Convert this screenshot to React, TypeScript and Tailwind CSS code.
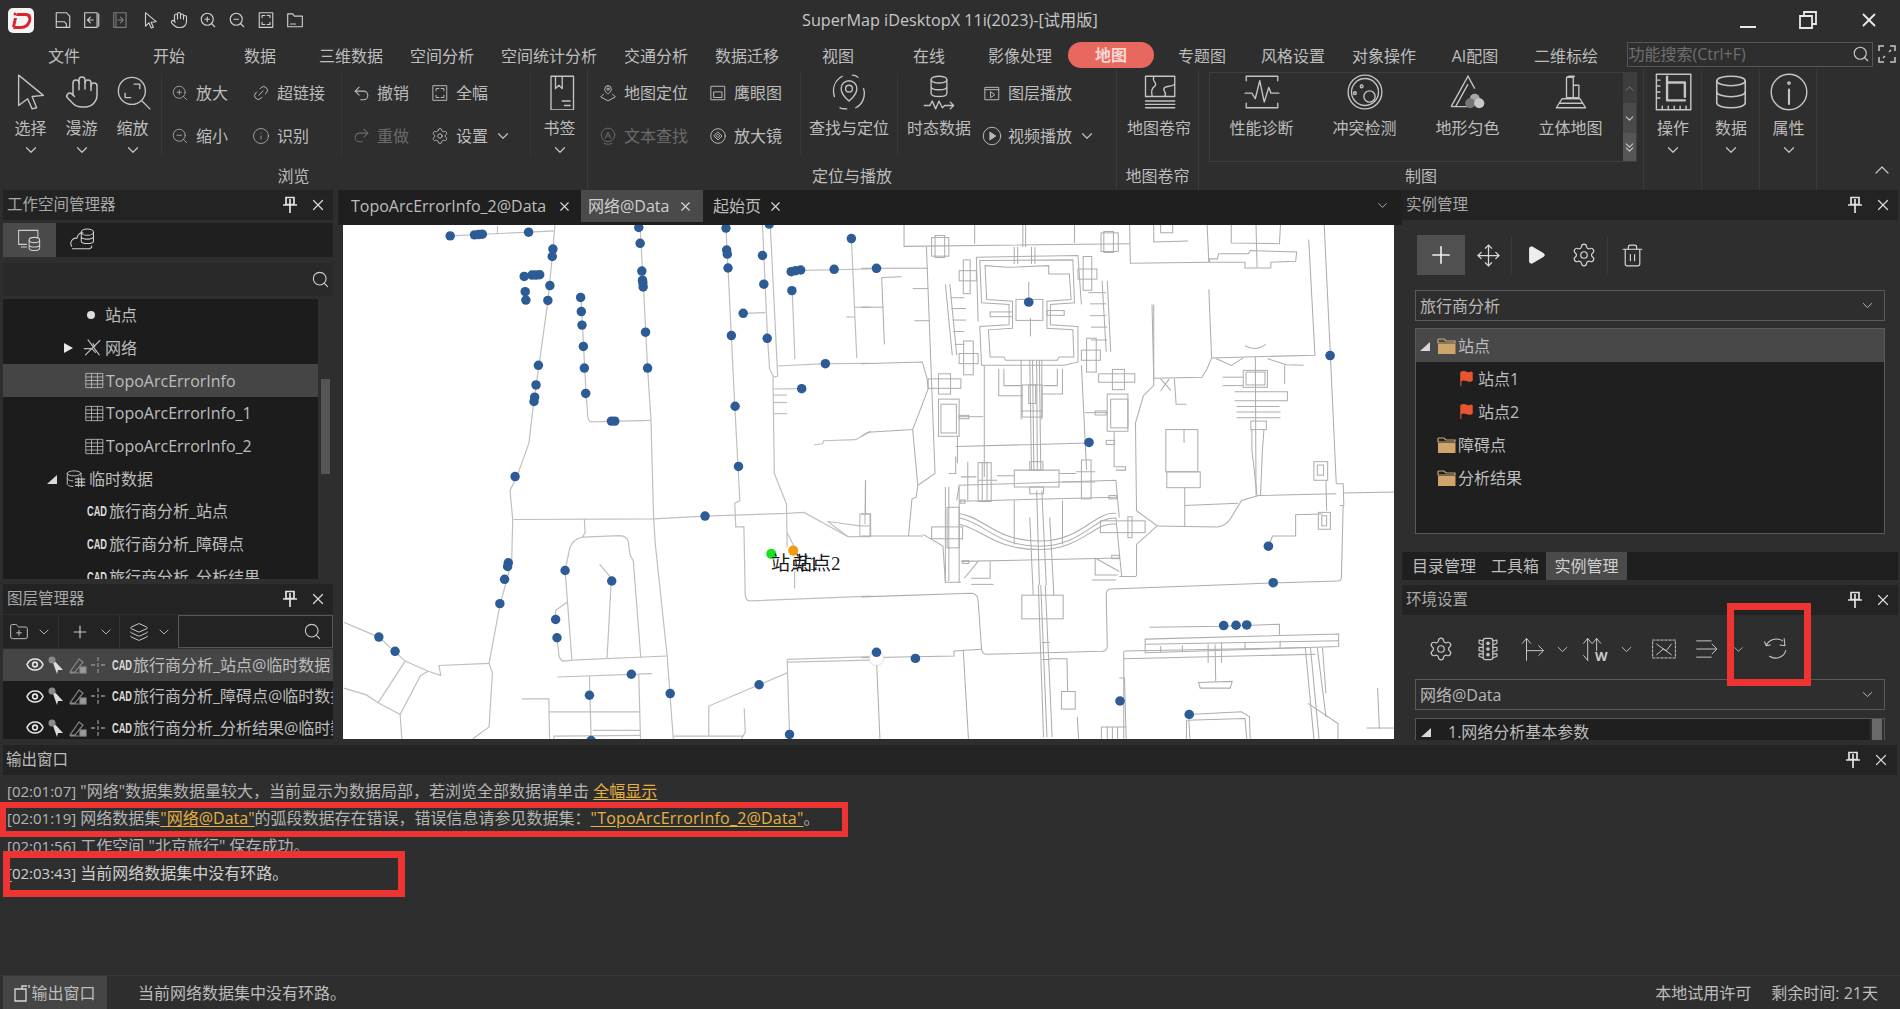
import React from 'react';
import {
  ChevronDown, ChevronUp, Search, X, Plus, Move, Play, Settings, Trash2, Flag, Eye, Layers,
  Hand, ZoomIn, ZoomOut, Link2, Undo2, Redo2, Info, Database, FolderPlus,
} from 'lucide-react';

const TABS: [string, string][] = [
  ['文件', 'w-[119px]'], ['开始', 'w-[91px]'], ['数据', 'w-[91px]'], ['三维数据', 'w-[91px]'], ['空间分析', 'w-[91px]'],
  ['空间统计分析', 'w-[123px]'], ['交通分析', 'w-[91px]'], ['数据迁移', 'w-[91px]'], ['视图', 'w-[91px]'], ['在线', 'w-[91px]'],
  ['影像处理', 'w-[91px]'], ['地图', 'w-[91px]'], ['专题图', 'w-[91px]'], ['风格设置', 'w-[91px]'], ['对象操作', 'w-[91px]'],
  ['AI配图', 'w-[91px]'], ['二维标绘', 'w-[91px]'],
];

const Svg = ({ size = 32, children, sw = 1.2 }: { size?: number; children: React.ReactNode; sw?: number }) => (
  <svg width={size} height={size} viewBox="0 0 32 32" fill="none" stroke="currentColor" strokeWidth={sw} strokeLinecap="round" strokeLinejoin="round">
    {children}
  </svg>
);

const ArrowBig = () => (
  <Svg size={36}>
    <path d="M5 1L27 19L17 20L21 30L17 31L13 22L5 28Z" />
  </Svg>
);
const ZoomFit = () => (
  <Svg size={36}>
    <circle cx="15" cy="15" r="12" />
    <path d="M24 24l7 7M17 9h5v4M9 17v4h5" />
  </Svg>
);
const BookIcon = () => (
  <Svg size={36}>
    <path d="M8 2h20v30H8zM12 2v11l3-3 3 3V2M18 24h7M20 28h5" />
  </Svg>
);
const FindIcon = () => (
  <Svg size={36}>
    <path d="M16 6a7 7 0 0 1 7 7c0 5-7 11-7 11s-7-6-7-11a7 7 0 0 1 7-7z" />
    <circle cx="16" cy="13" r="3" />
    <path d="M10 2C3 6 1 13 3 20M22 30c6-3 9-10 7-17M24 3c-1-1-3-2-5-2M8 30c1 1 4 1 6 1" />
  </Svg>
);
const TemporalIcon = () => (
  <Svg size={36}>
    <ellipse cx="16" cy="5" rx="7" ry="3" />
    <path d="M9 5v12c0 2 3 3 7 3s7-1 7-3V5M9 11c0 2 3 3 7 3s7-1 7-3" />
    <path d="M3 28h5l2-4 3 7 3-7 3 6 2-2h7M26 25l3 3-3 3" />
  </Svg>
);
const CurtainIcon = () => (
  <Svg size={36}>
    <path d="M4 2h26v18H4zM12 2c-4 4 4 6 0 9-3 2-3 5-2 9M21 20c3-4-3-5 0-8 3-2 6 0 9-3" />
    <path d="M4 24h26M4 27h26M4 30h26" />
  </Svg>
);
const PerfIcon = () => (
  <Svg size={36}>
    <path d="M2 6V2h28v4M2 26v4h28v-4M1 17h6l3 5 4-16 4 19 4-13 2 5h7" />
  </Svg>
);
const ConflictIcon = () => (
  <Svg size={36}>
    <circle cx="16" cy="16" r="15" />
    <circle cx="16" cy="16" r="12" />
    <circle cx="20" cy="20" r="5" />
    <circle cx="13" cy="11" r="1.2" />
    <circle cx="7" cy="17" r="1.2" />
  </Svg>
);
const TerrainIcon = () => (
  <svg width="36" height="36" viewBox="0 0 32 32" fill="none" stroke="currentColor" strokeWidth="1.2">
    <path d="M1 29L16 2l6 11M5 29L16 9M1 29h15" />
    <circle cx="22" cy="22" r="4.5" fill="#a8a8a8" stroke="none" />
    <circle cx="18" cy="26" r="4.5" fill="#777" stroke="none" />
    <circle cx="26" cy="26" r="4.5" fill="#c9c9c9" stroke="none" />
  </svg>
);
const Solid3d = () => (
  <Svg size={36}>
    <path d="M12 3h6v18h-6zM18 10h5v11h-5zM12 3l2-1h5l-1 1M8 22h16l5 8H3zM6 26h20" />
  </Svg>
);
const OpIcon = () => (
  <Svg size={38}>
    <path d="M2 1h29v30H2zM2 6h3M2 11h3M2 16h3M2 21h3M7 28v3M12 28v3M17 28v3M22 28v3M27 28v3" />
    <path d="M11 3v20h15M11 8h15v12" strokeWidth="2" />
  </Svg>
);
const CloudDb = () => (
  <Svg size={28}>
    <path d="M3 23c-3-5 2-10 6-9 1-4 4-7 7-6M4 26h17c3 0 5-1 5-3" />
    <ellipse cx="21" cy="7" rx="7" ry="3.5" />
    <path d="M14 7v10c0 2 3 3 7 3s7-1 7-3V7M14 12c0 2 3 3 7 3s7-1 7-3" />
  </Svg>
);
const WsIcon = () => (
  <Svg size={28}>
    <path d="M12 21H3V5h22v8M6 24h6" />
    <ellipse cx="21" cy="16" rx="6" ry="3" />
    <path d="M15 16v9c0 2 3 3 6 3s6-1 6-3v-9M15 21c0 2 3 3 6 3s6-1 6-3" />
  </Svg>
);
const NetIcon = () => (
  <Svg size={20} sw={1.8}>
    <path d="M8 3l18 24M27 4L4 27M2 17l12 0 6 6M16 9l3 5" />
  </Svg>
);
const TableIcon = () => (
  <Svg size={19} sw={1.4}>
    <path d="M2 4h28v24H2zM2 10h28M2 16h28M2 22h28M11 4v24M21 4v24" />
  </Svg>
);
const TempDb = () => (
  <Svg size={20} sw={1.6}>
    <ellipse cx="13" cy="7" rx="11" ry="4" />
    <path d="M2 7v17c0 2 4 4 9 4M2 15c0 2 4 4 9 4M24 7v5" />
    <path d="M15 16h15M15 21h15M15 26h15M20 14v14M25 14v14" strokeWidth="2" />
  </Svg>
);
const Tri = ({ down = false }: { down?: boolean }) =>
  down ? (
    <svg width="12" height="12" viewBox="0 0 12 12" className="text-[#d8d8d8]"><path d="M11 2v9H1z" fill="currentColor" /></svg>
  ) : (
    <svg width="12" height="12" viewBox="0 0 12 12" className="text-[#e8e8e8]"><path d="M2 1l9 5-9 5z" fill="currentColor" /></svg>
  );
const FolderIc = () => (
  <svg width="19" height="18" viewBox="0 0 19 18">
    <path d="M1 3a1 1 0 0 1 1-1h5l2 2h9v2H1z" fill="none" stroke="#c9a675" strokeWidth="1.2" />
    <path d="M1 7h17.500v10H1z" fill="#d0a56c" />
  </svg>
);
const Snap = () => (
  <svg width="16" height="18" viewBox="0 0 16 18" stroke="#8f8f8f" strokeWidth="1.3"><path d="M8 1v4M8 7v4M8 13v4M1 9h4M11 9h4" /></svg>
);
const Selectable = () => (
  <svg width="18" height="20" viewBox="0 0 18 20"><path d="M5 2l12 13-5 0-1 4z" fill="#dcdcdc" /><circle cx="6" cy="5" r="3.500" fill="#8a8a8a" /></svg>
);
const EditLock = () => (
  <svg width="18" height="18" viewBox="0 0 18 18" fill="none" stroke="#8a8a8a" strokeWidth="1.2">
    <path d="M1 16L10 3l4 3-8 10zM1 17h9" />
    <rect x="11" y="11" width="6" height="6" fill="#9a9a9a" />
  </svg>
);
const PinIc = () => (
  <svg width="16" height="18" viewBox="0 0 16 18" fill="none" stroke="#e2e2e2" strokeWidth="1.700">
    <path d="M4 1.500h8v7H4zM1 9h14M8 9v8M8 3v5" />
  </svg>
);

const SmallBtn = ({ icon, label, dim, chev, w }: { icon: React.ReactNode; label: string; dim?: boolean; chev?: boolean; w: string }) => (
  <div className={`h-[42.500px] flex items-center ${w} ${dim ? 'text-[#6b6b6b]' : 'text-[#bdbdbd]'}`}>
    <span className="w-[30px] flex justify-center">{icon}</span>
    <span className="ml-[1px]">{label}</span>
    {chev && <ChevronDown size={18} strokeWidth={1.6} className="ml-[6px]" />}
  </div>
);

const BigBtn = ({ icon, label, w, chev, cls = '' }: { icon: React.ReactNode; label: string; w: string; chev?: boolean; cls?: string }) => (
  <div className={`flex flex-col items-center shrink-0 ${w} ${cls}`}>
    <div className="h-[44px] flex items-center justify-center text-[#c4c4c4]">{icon}</div>
    <div className="mt-[2px] h-[24px] leading-[24px] whitespace-nowrap text-[#bdbdbd]">{label}</div>
    {chev && <div className="h-[20px] flex items-center"><ChevronDown size={18} strokeWidth={1.6} className="text-[#c4c4c4]" /></div>}
  </div>
);

const Group = ({ label, w, children }: { label: string; w: string; children: React.ReactNode }) => (
  <div className={`flex flex-col shrink-0 border-r border-[#3a3a3a] ${w}`}>
    <div className="h-[92px] flex">{children}</div>
    <div className="h-[28px] leading-[28px] text-center text-[#bdbdbd]">{label}</div>
  </div>
);
const Sep = () => <div className="w-px h-[82px] mt-[3px] bg-[#383838] shrink-0" />;

const PanelHead = ({ title }: { title: string }) => (
  <div className="h-[30px] bg-[#232323] flex items-center justify-between pl-[4px] pr-[6px] text-[#a8a8a8] text-[15.500px] shrink-0">
    <span>{title}</span>
    <span className="flex items-center gap-[11px]">
      <PinIc />
      <X size={18} strokeWidth={1.6} className="text-[#d8d8d8]" />
    </span>
  </div>
);

const TreeRow = ({ pad, sel, children }: { pad: string; sel?: boolean; children: React.ReactNode }) => (
  <div className={`h-[32.700px] flex items-center whitespace-nowrap text-[#bdbdbd] ${pad} ${sel ? 'bg-[#454545]' : ''}`}>{children}</div>
);

const Cad = () => (
  <span className="inline-block w-[21px] shrink-0 whitespace-nowrap text-[14px] font-bold leading-none text-[#dcdcdc] font-['Liberation_Sans',sans-serif] scale-x-[0.66] origin-left">CAD</span>
);

const LayerRow = ({ sel, label }: { sel?: boolean; label: string }) => (
  <div className={`h-[31.500px] pl-[22px] flex items-center whitespace-nowrap overflow-hidden text-[#bdbdbd] ${sel ? 'bg-[#454545]' : ''}`}>
    <Eye size={19} strokeWidth={2} className="text-[#e6e6e6] w-[20px] shrink-0" />
    <span className="ml-[1px] w-[20px] shrink-0"><Selectable /></span>
    <span className="ml-[3px] w-[20px] shrink-0"><EditLock /></span>
    <span className="ml-[1px] w-[20px] shrink-0"><Snap /></span>
    <span className="ml-[2px] flex"><Cad /></span>
    <span>{label}</span>
  </div>
);

const Dropdown = ({ label }: { label: string }) => (
  <div className="mx-[13px] h-[31px] shrink-0 border border-[#5a5a5a] flex items-center justify-between pl-[4px] pr-[8px] text-[#b8b8b8]">
    <span>{label}</span>
    <ChevronDown size={17} strokeWidth={1.4} />
  </div>
);

// road geometry, traced in the pixel space of two map crops
const ROADS_A = [
  'M323 47L632 32', 'M463 18V40',
  'M633 15L625 110L612 240L590 400L570 540L556 660L520 760L500 800L508 886L505 1010L470 1140L438 1312L448 1340L438 1500L390 1535',
  'M510 886L925 884L1077 876L1320 868L1370 865L1500 937H1568',
  'M720 884L722 925L715 938L825 934Q845 935 850 950L855 990L865 1010L887 1295',
  'M715 938Q685 945 677 970L663 1037L683 1300', 'M683 1302L965 1290', 'M635 1182V1155L670 1130',
  'M639 1236L645 1290Q650 1305 660 1305L683 1302', 'M765 1018L800 1060L787 1298',
  'M885 22L895 200L907 438L917 590L925 884L930 960L965 1290L983 1535',
  'M710 229L725 513L730 580Q732 597 740 597L917 593',
  'M1139 24L1145 142L1165 550L1180 830L1165 838L1168 908H1192L1196 1110Q1198 1127 1210 1127L1568 1113',
  'M1247 15L1262 350L1268 440L1280 465L1292 462L1270 15', 'M1292 432L1433 425L1568 424',
  'M1278 465L1282 750L1318 840L1320 968', 'M1320 925L1340 965', 'M1342 1040V1090',
  'M1278 500L1363 499', 'M1278 518H1320', 'M1278 540H1320', 'M1278 573H1320',
  'M1190 276L1255 274', 'M1335 209L1343 412', 'M1332 150L1568 145', 'M1510 55L1526 408', 'M1520 258H1568', 'M1495 287H1520',
  'M1400 665L1425 662L1428 653L1522 650L1568 625', 'M1552 770L1550 900', 'M1535 935V870H1565V935', 'M1535 905H1565',
  'M1440 892L1535 905', 'M1440 892L1500 937',
  'M8 1190L112 1234L190 1305L258 1335L295 1347L290 1318L438 1312', 'M190 1305L110 1428',
  'M8 1385L75 1405L110 1428L175 1463', 'M258 1335L235 1348L175 1463L180 1535',
  'M640 1352L920 1342', 'M735 1350L740 1535', 'M881 1345L886 1535', 'M535 1417H615L617 1535', 'M617 1455H885', 'M745 1510H885',
  'M630 1535V1527L885 1525', 'M983 1527H1190', 'M1088 1527V1438L1237 1375L1320 1340', 'M1193 1445L1196 1515L1185 1535',
  'M1320 1300L1327 1522', 'M1320 1300L1568 1292', 'M1320 1308L1568 1302',
];

const ROADS_B = [
  'M125 15V78L780 70', 'M330 15V70', 'M620 15V68', 'M780 15L782 128L1010 125', 'M1005 15L1010 125', 'M1075 15V68L1215 70L1218 15', 'M1147 15L1150 140',
  'M1012 125V115H1035L1038 100H1125L1130 90L1265 95L1262 122L1190 125V142H1115V125Z', 'M850 15V65L950 62', 'M870 15V38H905V15',
  'M0 143H195', 'M60 170L118 168', 'M60 170L68 368', 'M150 203H195', 'M0 258H65', 'M155 298H200',
  'M190 80L215 750L165 785L160 820L148 825L138 935', 'M0 425L178 420L192 470L195 500L150 620L20 628L0 640', 'M150 620L165 785',
  'M13 770V870', 'M0 870H28V935', 'M0 935H180',
  'M425 140L545 135V160H605L610 235L540 240V320L615 325L618 405H575L570 415H420L415 405H375L370 325L440 320V240L365 235L360 135Z',
  'M345 120L615 118L620 245L550 250V310L630 315V420L590 430H400L350 430L345 315L430 310V250L350 245Z',
  'M335 110L630 105L640 250M335 110L340 300',
  'M487 183V235', 'M492 290V345', 'M470 15V80', 'M478 15V80', 'M445 80V130M455 80V130M495 80V130M505 80V130',
  'M245 190L265 400', 'M258 190L278 400', 'M260 230H300', 'M262 262H305', 'M266 296H305', 'M268 330H300', 'M272 368H300',
  'M715 180L725 390', 'M700 180L712 390', 'M660 215H712', 'M665 248H712', 'M665 283H712', 'M668 317H715', 'M668 355H715',
  'M465 415V590', 'M525 415V590', 'M490 415L495 740', 'M510 415L512 740', 'M498 415L502 740', 'M518 415L522 740',
  'M400 440V520H470', 'M585 440V515H525', 'M415 440V490H465', 'M570 440V490H530', 'M465 565H525',
  'M275 670L660 660', 'M285 582H355', 'M650 570H715', 'M358 430V760', 'M640 430L655 740', 'M280 640V720', 'M735 625V730H768V740H740',
  'M255 750H275V700', 'M395 757H445M575 750H625', 'M290 760H335M680 745H625', 'M445 740H575V790H445Z', 'M340 770H395M585 775H680',
  'M278 830L285 785L740 770L750 880', 'M285 832L740 820', 'M310 715V830', 'M445 830V960M585 830V960',
  'M285 868C360 880 390 950 520 950C640 950 680 860 740 868', 'M285 882C360 895 390 965 520 965C640 965 680 875 740 882', 'M285 900C355 915 385 975 520 975C640 975 680 890 740 900',
  'M245 790V1072H290', 'M285 790V1072', 'M255 790V1068', 'M180 930L238 965L245 1072', 'M750 1055H795Q802 1055 800 1040V960L860 905L800 860L797 600L820 520L850 490V250',
  'M740 880L757 1055', 'M290 1010L750 1000', 'M320 1078H385', 'M670 1065H740', 'M340 1010L300 1060', 'M680 1000L750 1040',
  'M375 1010V1060H320', 'M680 1000V1050H745', 'M490 880L500 1110', 'M548 880L560 1110', 'M510 800L518 1080', 'M525 800L538 1080',
  'M515 1080L530 1530', 'M535 1080L555 1530', 'M522 1080L540 1530', 'M525 1250H548M525 1300H550',
  'M0 1115L320 1104Q338 1105 340 1125L350 1270Q352 1285 365 1285L700 1276Q715 1275 715 1260L712 1105Q714 1092 725 1092L1197 1074L1385 1068Q1395 1068 1395 1055L1400 845H1390',
  'M1380 780H1400L1402 845', 'M1400 808L1548 805', 'M850 468L990 465L1005 440L1018 408L1318 400L1300 58', 'M1345 15L1363 402L1380 780', 'M845 250L850 468', 'M1010 205L1018 408',
  'M860 905L1035 908Q1060 905 1075 880L1105 830L1155 815L1380 810', 'M940 845L1095 838', 'M940 790V908', 'M938 620V660', 'M1145 405L1147 815',
  'M1050 465H1110', 'M1050 490H1110', 'M1085 508H1238V535H1085', 'M1090 552H1215', 'M1090 568H1218', 'M1090 585H1218',
  'M1135 620V680L1150 815', 'M1170 620L1165 690L1160 815', 'M1350 770L1352 860', 'M1183 965L1195 935H1262V872L1340 870',
  'M1030 410L1075 430L1110 408', 'M1180 410L1235 428L1285 430', 'M1230 430V485', 'M1115 372Q1145 390 1175 368', 'M870 470L900 505', 'M895 470L870 505', 'M910 470L915 545H945',
  'M838 1205L1053 1202L1215 1196V1228', 'M825 1240L1387 1225V1262L825 1280Z', 'M825 1255L1387 1245', 'M765 1275L1300 1265', 'M763 1275V1535', 'M763 1298L1320 1285',
  'M870 1260V1278', 'M933 1258V1276', 'M1115 1250V1270', 'M1217 1245V1265', 'M1008 1255V1310', 'M1028 1255L1030 1365', 'M1047 1250V1310',
  'M980 1368L1078 1365L1072 1385H985Z', 'M1290 1265L1315 1535', 'M1305 1265L1330 1535', 'M1325 1265L1350 1470', 'M1340 1265L1350 1400', 'M1298 1430L1385 1490V1535',
  'M1500 1385L1505 1505', 'M1468 1503H1548', 'M952 1463L1105 1455L1128 1470L1130 1535', 'M945 1480L1115 1475L1120 1535', 'M945 1480V1535', 'M952 1480L955 1535',
  'M698 1500H770', 'M698 1500V1535', 'M715 1500V1535', 'M730 1500V1535', 'M745 1500V1535', 'M750 1355H765L770 1535', 'M548 1298H598L600 1395', 'M628 1470L632 1535',
  'M297 1275L312 1535', 'M270 1275L350 1270', 'M45 1300L55 1535', 'M0 1295L270 1290V1275', 'M940 790',
];

const RECTS_B: [number, number, number, number][] = [
  [205, 52, 50, 55], [697, 38, 50, 55], [215, 46, 28, 65], [705, 34, 28, 62], [285, 150, 50, 30], [297, 118, 20, 100], [630, 145, 55, 30], [645, 108, 25, 100],
  [285, 395, 55, 30], [298, 358, 28, 100], [640, 385, 55, 30], [655, 350, 28, 100], [450, 235, 78, 62], [375, 272, 65, 14], [540, 268, 50, 14],
  [195, 470, 95, 28], [225, 455, 35, 60], [690, 455, 105, 25], [730, 442, 35, 60], [225, 530, 60, 110], [232, 545, 45, 85], [715, 515, 60, 110], [725, 530, 50, 85],
  [468, 488, 58, 95], [487, 488, 20, 55], [340, 718, 38, 115], [352, 718, 14, 115], [640, 710, 28, 115], [205, 908, 90, 35], [250, 850, 35, 120], [695, 890, 130, 35],
  [775, 878, 12, 62], [467, 1110, 120, 70], [885, 620, 93, 125], [888, 745, 97, 47], [1110, 445, 70, 50], [1118, 450, 55, 38], [1132, 595, 45, 25], [1315, 715, 40, 55],
  [1325, 725, 18, 30], [1328, 865, 35, 50], [1338, 875, 14, 30], [582, 1395, 40, 52], [490, 715, 38, 25], [490, 790, 40, 20], [680, 565, 32, 12], [712, 652, 24, 12],
  [285, 578, 28, 10], [720, 815, 22, 10], [288, 828, 14, 10], [295, 1008, 18, 8], [728, 992, 22, 10],
];

const DOTS_A: [number, number][] = [
  [323, 47], [395, 44], [407, 43], [418, 42], [555, 36], [627, 86], [625, 108], [542, 167], [565, 163], [577, 163], [588, 162], [618, 194], [545, 212], [547, 237], [612, 238],
  [709, 229], [711, 271], [713, 311], [717, 374], [720, 438], [724, 513], [800, 595], [810, 595], [584, 430], [577, 488], [573, 524], [571, 537], [515, 759], [495, 1014], [493, 1025],
  [484, 1063], [470, 1135], [663, 1037], [801, 1068], [635, 1182], [639, 1236], [112, 1234], [160, 1276], [859, 1344], [735, 1406], [974, 1401], [1237, 1375], [1327, 1522], [740, 1540],
  [881, 22], [885, 69], [890, 151], [892, 178], [893, 186], [894, 198], [901, 332], [907, 438], [1139, 24], [1141, 89], [1143, 101], [1145, 142], [1155, 342], [1166, 551], [1176, 729],
  [1077, 876], [1267, 12], [1247, 105], [1251, 190], [1190, 276], [1261, 350], [1363, 499], [1433, 425], [1334, 209], [1332, 153], [1345, 150], [1360, 148], [1459, 146], [1510, 55],
];
const DOTS_B: [number, number][] = [
  [45, 143], [487, 243], [662, 658], [1362, 401], [1183, 965], [1197, 1073], [1053, 1200], [1089, 1199], [1120, 1198], [45, 1279], [158, 1297], [752, 1423], [953, 1463],
];

const MapView = () => (
  <svg viewBox="342 225 1051 514" className="block w-full h-full">
    <rect x="342" y="225" width="1051" height="514" fill="#ffffff" />
    <g transform="translate(340 220) scale(0.338)" fill="none" stroke="#bfbfbf" strokeWidth="3.500">
      {ROADS_A.map((d, i) => <path key={i} d={d} />)}
    </g>
    <g transform="translate(860 220) scale(0.3444 0.338)" fill="none" stroke="#adadad" strokeWidth="3">
      {ROADS_B.map((d, i) => <path key={i} d={d} />)}
      {RECTS_B.map(([x, y, w, h], i) => <rect key={i} x={x} y={y} width={w} height={h} />)}
    </g>
    <g transform="translate(340 220) scale(0.338)" fill="#2d5b96">
      {DOTS_A.map(([x, y], i) => <circle key={i} cx={x} cy={y} r="14" />)}
      <circle cx="1273" cy="988" r="15" fill="#1fe01f" />
      <circle cx="1338" cy="978" r="15" fill="#f39c12" />
    </g>
    <g transform="translate(860 220) scale(0.3444 0.338)" fill="#2d5b96">
      <circle cx="45" cy="1297" r="21" fill="#ffffff" stroke="#cfcfcf" strokeWidth="2" />
      {DOTS_B.map(([x, y], i) => <circle key={i} cx={x} cy={y} r="14" />)}
    </g>
    <g fontSize="19" fill="#1a1a1a" fontFamily="'Liberation Serif','Noto Sans CJK SC',serif">
      <text x="770" y="570">站点1</text>
      <text x="792" y="570">站点2</text>
    </g>
  </svg>
);

const Logo = () => (
  <svg width="26" height="25" viewBox="0 0 26 25">
    <rect width="26" height="25" rx="5" fill="#f4f4f4" />
    <path d="M9 5h9c5 0 6 4 5 8-1 5-5 8-10 8H5l1-3h6c4 0 7-2 8-5 1-3 0-5-3-5H8z" fill="#d8262c" />
    <path d="M6 10h3L7 19H4z" fill="#d8262c" />
    <circle cx="7" cy="6" r="1.500" fill="#d8262c" />
  </svg>
);

const OutputLine = ({ time, children }: { time: string; children: React.ReactNode }) => (
  <div className="h-[27.300px] leading-[27.300px] whitespace-nowrap">
    <span className="text-[15px]">[{time}]</span> {children}
  </div>
);
const Lnk = ({ children, cls = '' }: { children: React.ReactNode; cls?: string }) => (
  <span className={`text-[#e5b13f] underline underline-offset-2 ${cls}`}>{children}</span>
);

export default function App() {
  return (
    <div className="w-[1900px] h-[1009px] overflow-hidden bg-[#2e2e2e] text-[16px] text-[#bdbdbd] font-['Open_Sans','Noto_Sans_CJK_SC',sans-serif] flex flex-col">
      {/* title bar */}
      <div className="h-[40px] shrink-0 flex items-center relative">
        <div className="ml-[8px] w-[26px]"><Logo /></div>
        <div className="ml-[20px] flex items-center gap-[11px] text-[#cfcfcf]">
          <Svg size={18} sw={2}><path d="M4 3h18l6 6v20H4zM4 19h14l4 4v6" /></Svg>
          <Svg size={18} sw={2}><path d="M3 3h22v26H3zM28 5v22M18 16H9M13 11l-5 5 5 5" /></Svg>
          <span className="text-[#7c7c7c]"><Svg size={18} sw={2}><path d="M3 3h22v26H3zM7 5v22M10 16h9M15 11l5 5-5 5" /></Svg></span>
          <Svg size={18} sw={2}><path d="M8 3l19 16-9 1 4 9-4 1-4-9-6 6z" /></Svg>
          <Hand size={18} strokeWidth={1.5} />
          <ZoomIn size={18} strokeWidth={1.5} />
          <ZoomOut size={18} strokeWidth={1.5} />
          <Svg size={18} sw={2}><path d="M4 3h24v26H4zM9 12V8h5M23 20v4h-5M18 8h5v4M14 24H9v-4" /></Svg>
          <Svg size={18} sw={2}><path d="M3 5h9l3 4h14v19H3zM8 23h9" /></Svg>
        </div>
        <div className="absolute left-[802px] w-[294px] text-center whitespace-nowrap text-[#c8c8c8] text-[16.200px]">SuperMap iDesktopX 11i(2023)-[试用版]</div>
        <div className="ml-auto flex items-center text-[#e8e8e8]">
          <span className="w-[60px] flex justify-center pt-[14px]"><span className="block w-[16px] h-[2px] bg-[#e8e8e8]" /></span>
          <span className="w-[60px] flex justify-center">
            <svg width="18" height="18" viewBox="0 0 18 18" fill="none" stroke="currentColor" strokeWidth="1.800"><path d="M1 5h12v12H1zM5 5V1h12v12h-4" /></svg>
          </span>
          <span className="w-[62px] flex justify-center"><X size={22} strokeWidth={2} /></span>
        </div>
      </div>

      {/* ribbon tabs */}
      <div className="h-[30px] shrink-0 flex items-center pl-[4.500px] pt-[1px] relative">
        {TABS.map(([t, w]) => (
          <div key={t} className={`${w} shrink-0 text-center whitespace-nowrap`}>
            {t === '地图' ? (
              <span className="block mx-auto w-[86px] h-[26px] leading-[26px] -mt-[2px] rounded-[13px] bg-[#e8685f] text-[#f4d8d4] font-semibold">{t}</span>
            ) : t}
          </div>
        ))}
        <div className="ml-[15px] w-[246px] h-[25px] -mt-[3px] border border-[#555] flex items-center justify-between px-[1px] text-[#6e6e6e] text-[16px] shrink-0">
          <span>功能搜索(Ctrl+F)</span>
          <Search size={18} strokeWidth={1.5} className="text-[#c8c8c8] mr-[1px]" />
        </div>
        <svg width="18" height="18" viewBox="0 0 18 18" fill="none" stroke="#c8c8c8" strokeWidth="1.500" className="ml-[5px] -mt-[3px] shrink-0">
          <path d="M1 6V1h5M12 1h5v5M17 12v5h-5M6 17H1v-5M5 13l2-2M13 5l-2 2" />
        </svg>
      </div>

      {/* ribbon */}
      <div className="h-[120px] shrink-0 flex">
        <Group label="浏览" w="w-[588px]">
          <div className="flex pl-[5px] w-[161px] shrink-0">
            <BigBtn w="w-[51px]" label="选择" chev icon={<ArrowBig />} />
            <BigBtn w="w-[51px]" label="漫游" chev icon={<Hand size={36} strokeWidth={1} />} />
            <BigBtn w="w-[51px]" label="缩放" chev icon={<ZoomFit />} />
          </div>
          <Sep />
          <div className="w-[179px] shrink-0 pl-[3px] pt-[2px] grid grid-cols-[81px_1fr] content-start">
            <SmallBtn w="" label="放大" icon={<ZoomIn size={18} strokeWidth={1} />} />
            <SmallBtn w="" label="超链接" icon={<Link2 size={18} strokeWidth={1.200} className="-rotate-45" />} />
            <SmallBtn w="" label="缩小" icon={<ZoomOut size={18} strokeWidth={1} />} />
            <SmallBtn w="" label="识别" icon={<Info size={18} strokeWidth={1} />} />
          </div>
          <Sep />
          <div className="w-[188px] shrink-0 pl-[4px] pt-[2px] grid grid-cols-[79px_1fr] content-start">
            <SmallBtn w="" label="撤销" icon={<Undo2 size={19} strokeWidth={1.300} />} />
            <SmallBtn w="" label="全幅" icon={<Svg size={18} sw={1.700}><path d="M4 3h24v26H4zM9 12V8h5M23 20v4h-5M18 8h5v4M14 24H9v-4" /></Svg>} />
            <SmallBtn w="" dim label="重做" icon={<Redo2 size={19} strokeWidth={1.300} />} />
            <SmallBtn w="" chev label="设置" icon={<Settings size={18} strokeWidth={1.200} />} />
          </div>
          <Sep />
          <BigBtn w="w-[57px]" label="书签" chev icon={<BookIcon />} />
        </Group>
        <Group label="定位与播放" w="w-[529px]">
          <div className="w-[212px] shrink-0 pl-[5px] pt-[2px] grid grid-cols-[110px_1fr] content-start">
            <SmallBtn w="" label="地图定位" icon={<Svg size={18} sw={1.700}><path d="M16 3a6 6 0 0 1 6 6c0 4-6 9-6 9s-6-5-6-9a6 6 0 0 1 6-6zM8 18l-5 5 13 7 13-7-5-5" /><circle cx="16" cy="9" r="2" /></Svg>} />
            <SmallBtn w="" label="鹰眼图" icon={<Svg size={18} sw={1.700}><path d="M4 4h24v24H4zM9 14h14v10H9z" /></Svg>} />
            <SmallBtn w="" dim label="文本查找" icon={<Svg size={18} sw={1.700}><circle cx="16" cy="14" r="12" /><path d="M11 20l5-11 5 11M13 16h6M9 29l7 2 7-2" /></Svg>} />
            <SmallBtn w="" label="放大镜" icon={<Svg size={18} sw={1.700}><circle cx="16" cy="16" r="13" /><path d="M16 9l7 7-7 7-7-7zM16 13l3 3-3 3-3-3z" /></Svg>} />
          </div>
          <Sep />
          <BigBtn w="w-[96px]" label="查找与定位" icon={<FindIcon />} />
          <Sep />
          <BigBtn w="w-[79px]" cls="pl-[3px]" label="时态数据" icon={<TemporalIcon />} />
          <div className="flex-1 pt-[2px] flex flex-col">
            <SmallBtn w="" label="图层播放" icon={<Svg size={18} sw={1.700}><path d="M4 6h24v22H4zM4 10h24M14 14l7 5-7 5z" /></Svg>} />
            <SmallBtn w="" chev label="视频播放" icon={<Svg size={20} sw={1.500}><circle cx="16" cy="16" r="14" /><path d="M13 10l9 6-9 6z" fill="currentColor" /></Svg>} />
          </div>
        </Group>
        <Group label="地图卷帘" w="w-[82px]">
          <BigBtn w="w-[81px]" cls="pl-[3px]" label="地图卷帘" icon={<CurtainIcon />} />
        </Group>
        <Group label="制图" w="w-[445px]">
          <div className="ml-[10px] mt-[2px] w-[428px] h-[90px] border border-[#3e3e3e] flex">
            <BigBtn w="w-[103px]" cls="-mt-[3px]" label="性能诊断" icon={<PerfIcon />} />
            <BigBtn w="w-[103px]" cls="-mt-[3px]" label="冲突检测" icon={<ConflictIcon />} />
            <BigBtn w="w-[103px]" cls="-mt-[3px]" label="地形匀色" icon={<TerrainIcon />} />
            <BigBtn w="w-[103px]" cls="-mt-[3px]" label="立体地图" icon={<Solid3d />} />
            <div className="ml-auto w-[13px] flex flex-col">
              <div className="h-[30px] bg-[#3d3d3d] flex items-center justify-center text-[#666]"><ChevronUp size={13} /></div>
              <div className="h-[30px] bg-[#4a4a4a] flex items-center justify-center text-[#c8c8c8]"><ChevronDown size={13} /></div>
              <div className="h-[28px] bg-[#555] flex flex-col items-center justify-center text-[#c8c8c8] -space-y-[9px]"><ChevronDown size={13} /><ChevronDown size={13} /></div>
            </div>
          </div>
        </Group>
        <Group label="" w="w-[58px]"><BigBtn w="w-[58px]" label="操作" chev icon={<OpIcon />} /></Group>
        <Group label="" w="w-[58px]"><BigBtn w="w-[58px]" label="数据" chev icon={<Database size={38} strokeWidth={1} />} /></Group>
        <Group label="" w="w-[57px]">
          <BigBtn w="w-[57px]" label="属性" chev icon={<Svg size={38}><circle cx="16" cy="16" r="15" /><path d="M16 14v12" strokeWidth="1.800" /><circle cx="16" cy="8.500" r="1" /></Svg>} />
        </Group>
        <div className="flex-1 flex items-end justify-end pr-[6px] pb-[8px] text-[#c8c8c8]"><ChevronUp size={24} strokeWidth={1.200} /></div>
      </div>

      {/* main area */}
      <div className="h-[550px] shrink-0 flex">
        {/* left column */}
        <div className="w-[338px] shrink-0 pl-[3px] pr-[5px] flex flex-col">
          <PanelHead title="工作空间管理器" />
          <div className="mt-[3px] h-[34px] bg-[#1f1f1f] flex shrink-0">
            <div className="w-[53px] bg-[#4a4a4a] flex items-center justify-center text-[#cfcfcf]"><WsIcon /></div>
            <div className="w-[53px] flex items-center justify-center text-[#cfcfcf]"><CloudDb /></div>
          </div>
          <div className="mt-[6px] h-[33px] bg-[#292929] flex items-center justify-end pr-[3px] shrink-0 text-[#cfcfcf]"><Search size={19} strokeWidth={1.400} /></div>
          <div className="mt-[3px] h-[280px] flex bg-[#1c1c1c] shrink-0 overflow-hidden">
            <div className="flex-1 overflow-hidden">
              <TreeRow pad="pl-[81px]"><span className="w-[8px] h-[8px] rounded-full bg-[#dcdcdc] mr-[10px] ml-[3px]" />站点</TreeRow>
              <TreeRow pad="pl-[59px]"><Tri /><span className="ml-[9px]"><NetIcon /></span><span className="ml-[2px]">网络</span></TreeRow>
              <TreeRow pad="pl-[82px]" sel><TableIcon /><span className="ml-[2px]">TopoArcErrorInfo</span></TreeRow>
              <TreeRow pad="pl-[82px]"><TableIcon /><span className="ml-[2px]">TopoArcErrorInfo_1</span></TreeRow>
              <TreeRow pad="pl-[82px]"><TableIcon /><span className="ml-[2px]">TopoArcErrorInfo_2</span></TreeRow>
              <TreeRow pad="pl-[43px]"><Tri down /><span className="ml-[8px]"><TempDb /></span><span className="ml-[3px]">临时数据</span></TreeRow>
              <TreeRow pad="pl-[84px]"><Cad /><span className="ml-[1px]">旅行商分析_站点</span></TreeRow>
              <TreeRow pad="pl-[84px]"><Cad /><span className="ml-[1px]">旅行商分析_障碍点</span></TreeRow>
              <TreeRow pad="pl-[84px]"><Cad /><span className="ml-[1px]">旅行商分析_分析结果</span></TreeRow>
            </div>
            <div className="w-[15px] bg-[#2e2e2e] pt-[80px] shrink-0"><div className="h-[95px] mx-[3px] bg-[#555]" /></div>
          </div>
          <div className="mt-[5px]"><PanelHead title="图层管理器" /></div>
          <div className="mt-[1px] h-[33px] bg-[#232323] flex items-center shrink-0 text-[#c8c8c8]">
            <div className="w-[56px] h-full border-r border-[#333] flex items-center pl-[6px] gap-[7px]"><FolderPlus size={20} strokeWidth={1.100} /><ChevronDown size={16} strokeWidth={1.300} /></div>
            <div className="w-[61px] h-full border-r border-[#333] flex items-center pl-[11px] gap-[8px]"><Plus size={20} strokeWidth={1.400} /><ChevronDown size={16} strokeWidth={1.300} /></div>
            <div className="w-[58px] h-full flex items-center pl-[9px] gap-[7px]"><Layers size={20} strokeWidth={1.200} /><ChevronDown size={16} strokeWidth={1.300} /></div>
            <div className="flex-1 h-full border border-[#555] flex items-center justify-end pr-[10px]"><Search size={19} strokeWidth={1.400} /></div>
          </div>
          <div className="mt-[1px] h-[90px] bg-[#1c1c1c] overflow-hidden shrink-0">
            <LayerRow sel label="旅行商分析_站点@临时数据" />
            <LayerRow label="旅行商分析_障碍点@临时数据" />
            <LayerRow label="旅行商分析_分析结果@临时数据" />
          </div>
        </div>

        {/* center column */}
        <div className="w-[1064px] shrink-0 flex flex-col">
          <div className="h-[35px] pb-[3px] bg-[#1f1f1f] flex items-center shrink-0">
            <div className="w-[243px] h-[32px] pl-[13px] pr-[9px] flex items-center justify-between whitespace-nowrap">
              <span>TopoArcErrorInfo_2@Data</span><X size={15} strokeWidth={1.800} className="text-[#d8d8d8]" />
            </div>
            <div className="w-[122px] h-[32px] bg-[#4a4a4a] pl-[7px] pr-[10px] flex items-center justify-between text-[#cfcfcf] whitespace-nowrap">
              <span>网络@Data</span><X size={15} strokeWidth={1.800} className="text-[#d8d8d8]" />
            </div>
            <div className="w-[90px] h-[32px] pl-[10px] pr-[10px] flex items-center justify-between whitespace-nowrap">
              <span>起始页</span><X size={15} strokeWidth={1.800} className="text-[#d8d8d8]" />
            </div>
            <ChevronDown size={15} strokeWidth={1.400} className="ml-auto mr-[12px] -mt-[2px]" />
          </div>
          <div className="ml-[4px] mr-[7px] h-[514px] shrink-0"><MapView /></div>
        </div>

        {/* right column */}
        <div className="flex-1 min-w-0 pr-[2px] flex flex-col relative">
          <PanelHead title="实例管理" />
          <div className="h-[70px] shrink-0 flex items-center pl-[15px] text-[#d8d8d8]">
            <div className="w-[48px] h-[40px] bg-[#505050] flex items-center justify-center text-[#eeeeee]"><Plus size={28} strokeWidth={1.400} /></div>
            <div className="w-[46px] flex justify-center"><Move size={25} strokeWidth={1.200} /></div>
            <div className="w-px h-[38px] bg-[#3a3a3a]" />
            <div className="w-[48px] flex justify-center"><Play size={22} fill="currentColor" strokeWidth={1} className="text-[#eeeeee]" /></div>
            <div className="w-[47px] flex justify-center"><Settings size={26} strokeWidth={1.100} /></div>
            <div className="w-px h-[38px] bg-[#3a3a3a]" />
            <div className="w-[49px] flex justify-center"><Trash2 size={25} strokeWidth={1.100} /></div>
          </div>
          <Dropdown label="旅行商分析" />
          <div className="mx-[13px] mt-[7px] h-[206px] shrink-0 border border-[#5a5a5a] bg-[#1f1f1f] text-[#bdbdbd]">
            <div className="h-[33px] bg-[#484848] flex items-center pl-[3px]"><Tri down /><span className="ml-[6px]"><FolderIc /></span><span className="ml-[2px]">站点</span></div>
            <div className="h-[33px] flex items-center pl-[42px]"><Flag size={17} fill="#e8552f" strokeWidth={1.500} className="text-[#e8552f]" /><span className="ml-[3px]">站点1</span></div>
            <div className="h-[33px] flex items-center pl-[42px]"><Flag size={17} fill="#e8552f" strokeWidth={1.500} className="text-[#e8552f]" /><span className="ml-[3px]">站点2</span></div>
            <div className="h-[33px] flex items-center pl-[21px]"><FolderIc /><span className="ml-[2px]">障碍点</span></div>
            <div className="h-[33px] flex items-center pl-[21px]"><FolderIc /><span className="ml-[2px]">分析结果</span></div>
          </div>
          <div className="mt-[18px] h-[28px] shrink-0 bg-[#1f1f1f] flex items-center">
            <span className="ml-[10px] w-[79px]">目录管理</span>
            <span className="w-[55px]">工具箱</span>
            <span className="w-[81px] h-full bg-[#4a4a4a] text-center leading-[28px] text-[#cfcfcf]">实例管理</span>
          </div>
          <div className="mt-[5px]"><PanelHead title="环境设置" /></div>
          <div className="h-[64px] pt-[4px] shrink-0 flex items-center text-[#c8c8c8] relative">
            <span className="absolute left-[26px]"><Settings size={26} strokeWidth={1.100} /></span>
            <span className="absolute left-[73px]">
              <Svg size={26} sw={1.400}><rect x="10" y="3" width="12" height="26" rx="3" /><circle cx="16" cy="9" r="1.500" fill="currentColor" /><circle cx="16" cy="16" r="1.500" fill="currentColor" /><circle cx="16" cy="23" r="1.500" fill="currentColor" /><path d="M10 6L5 5v4l5 2M10 14H5v4l5 1M10 22H5v3l5 2M22 6l5-1v4l-5 2M22 14h5v4l-5 1M22 22h5v3l-5 2" /></Svg>
            </span>
            <span className="absolute left-[118px]"><Svg size={26} sw={1.200}><path d="M8 30V3M3 9l5-6 5 6M8 18h20M23 12l6 6-6 6" /></Svg></span>
            <ChevronDown size={17} strokeWidth={1.300} className="absolute left-[152px]" />
            <span className="absolute left-[180px]">
              <Svg size={26} sw={1.200}><path d="M7 30V3M2 9l5-6 5 6M18 18V3M13 9l5-6 5 6M2 24l5 6" /></Svg>
              <span className="absolute left-[13px] top-[14px] text-[13px] font-bold leading-none">W</span>
            </span>
            <ChevronDown size={17} strokeWidth={1.300} className="absolute left-[216px]" />
            <span className="absolute left-[249px]"><Svg size={26} sw={1.200}><path d="M2 5h28v22H2z" strokeDasharray="3 2" /><path d="M7 10l18 13M7 23l8-7 4 2 6-8" /></Svg></span>
            <span className="absolute left-[293px]"><Svg size={26} sw={1.200}><path d="M2 6h18M2 16h24M2 26h18M21 10l6 6-6 6" /></Svg></span>
            <ChevronDown size={15} strokeWidth={1.300} className="absolute left-[329px]" />
            <span className="absolute left-[361px]"><Svg size={26} sw={1.300}><path d="M4 12a13 12 0 0 1 20-6M4 12l-2-5M4 12l5-1M28 18a13 12 0 0 1-20 7M26 3l1 9-6-1" /></Svg></span>
          </div>
          <Dropdown label="网络@Data" />
          <div className="mx-[13px] mt-[8px] h-[22px] flex bg-[#1f1f1f] border border-[#555] border-b-0 overflow-hidden shrink-0">
            <div className="flex-1 flex items-center pl-[4px] pt-[4px]"><Tri down /><span className="ml-[16px]">1.网络分析基本参数</span></div>
            <div className="w-[14px] bg-[#2e2e2e]"><div className="mx-[2px] h-full bg-[#6a6a6a]" /></div>
          </div>
          <div className="absolute left-[325px] top-[413px] w-[84px] h-[83px] border-[7px] border-[#ee3333] pointer-events-none" />
        </div>
      </div>

      {/* output */}
      <div className="flex-1 min-h-0 flex flex-col relative">
        <div className="mt-[5px] mx-[3px] h-[30px] shrink-0 bg-[#232323] flex items-center justify-between pl-[3px] pr-[7px] text-[15.500px]">
          <span>输出窗口</span>
          <span className="flex items-center gap-[11px]"><PinIc /><X size={18} strokeWidth={1.600} className="text-[#d8d8d8]" /></span>
        </div>
        <div className="pl-[7px] pt-[3px] flex-1 text-[16px] text-[#b4b4b4]">
          <OutputLine time="02:01:07">"网络"数据集数据量较大，当前显示为数据局部，若浏览全部数据请单击 <Lnk>全幅显示</Lnk></OutputLine>
          <OutputLine time="02:01:19">网络数据集<Lnk>"网络@Data"</Lnk>的弧段数据存在错误，错误信息请参见数据集：<Lnk cls="tracking-[0.2px]">"TopoArcErrorInfo_2@Data"</Lnk>。</OutputLine>
          <OutputLine time="02:01:56">工作空间 "北京旅行" 保存成功。</OutputLine>
          <div className="text-[#cfcfcf]"><OutputLine time="02:03:43">当前网络数据集中没有环路。</OutputLine></div>
        </div>
        <div className="h-[34px] shrink-0 flex items-center border-t border-[#383838]">
          <div className="ml-[3px] w-[104px] h-full bg-[#454545] flex items-center justify-center text-[16px] gap-[1px]">
            <svg width="16" height="18" viewBox="0 0 16 18" fill="none" stroke="#d8d8d8" strokeWidth="1.300"><path d="M1 5h11v12H1zM8 5V2h5" /><path d="M15 1v3" /></svg>
            输出窗口
          </div>
          <span className="ml-[31px] text-[16px]">当前网络数据集中没有环路。</span>
          <span className="ml-auto text-[16px]">本地试用许可</span>
          <span className="ml-[20px] mr-[22px] text-[16px]">剩余时间: 21天</span>
        </div>
        <div className="absolute left-0 top-[62px] w-[848px] h-[35px] border-[6px] border-[#ee3333] pointer-events-none" />
        <div className="absolute left-[3px] top-[111px] w-[402px] h-[46px] border-[7px] border-[#ee3333] pointer-events-none" />
      </div>
    </div>
  );
}
